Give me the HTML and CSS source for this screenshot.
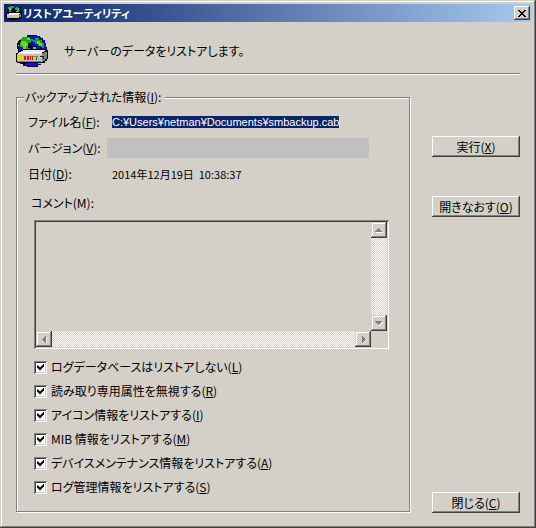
FILE: index.html
```html
<!DOCTYPE html>
<html lang="ja">
<head>
    <meta charset="UTF-8">
    <meta name="viewport" content="width=device-width, initial-scale=1.0">
    <title>リストアユーティリティ</title>
    <link rel="stylesheet" href="styles.css">
</head>
<body>
    <svg class="defs" width="0" height="0" aria-hidden="true">
        <symbol id="server" viewBox="0 0 32 32">
            <!-- globe -->
            <path fill="#0a0a50" d="M11 0h10v1h3v2h3v2h2v3h1v4h1v9h-1v4h-2v3h-3v2h-3v2h-11v-1h-4v-2h-3v-4h-2v-14h1v-4h2v-3h3v-2h3z"/>
            <path fill="#1010d8" d="M15 1h7v1h3v2h2v2h2v3h1v8h-5v-3h-5v-3h-4v-4h-3v-4h2zM3 11h5v2h3v3h-8zM9 28h13v2h-2v1h-9v-1h-2z"/>
            <path fill="#20a020" d="M9 2h5v2h3v2h-2v2h-3v3h2v3h-3v2h-3v-4h-4v-2h-2v-3h2v-3h2v-2h3zM19 3h4v2h3v3h2v5h-3v-2h-3v-2h-3v-2h-2v-2h2z"/>
            <path fill="#60e010" d="M5 6h5v2h2v3h-2v3h-3v-3h-2zM11 3h3v2h-3zM21 6h3v2h2v3h-3v-2h-2zM17 12h3v2h-3zM22 28h3v1h-3z"/>
            <path fill="#000" d="M3 5h2v2h-1v3h-2v4h-1v-6h1v-2h1zM26 3h1v2h-1zM12 11h2v2h-2zM24 12h2v2h-2zM28 23h2v3h-1v2h-3v-2h2zM4 27h6v2h-4v-1h-2z"/>
            <!-- server box -->
            <path fill="#000" d="M7 14h23v1h2v9h-1v2h-2v1h-2v1h-26v-1h-1v-9h2v-2h2v-1h3z"/>
            <path fill="#e8e8e8" d="M7 15h22v1h-1v1h-2v2h-24v-1h1v-1h2v-1h2z"/>
            <path fill="#fff" d="M3 17h22v1h-22z"/>
            <path fill="#c0c0c0" d="M1 19h25v8h-25z"/>
            <path fill="#808080" d="M26 18h2v-1h3v7h-2v2h-2v1h-1zM1 26h24v1h-24z"/>
            <path fill="#f0e000" d="M2 21h1v4h-1zM4 21h1v4h-1zM6 21h1v4h-1z"/>
            <path fill="#e81010" d="M8 21h2v4h-2zM11 21h2v4h-2zM14 21h1v4h-1zM16 21h1v4h-1z"/>
            <path fill="#20b030" d="M18 21h4v1h-1v2h-1v-2h-2z"/>
            <path fill="#f0e000" d="M18 22h2v3h-2zM21 22h1v1h-1z"/>
            <path fill="#2020d0" d="M20 23h1v2h-1z"/>
            <path fill="#202020" d="M24 21h4v1h-4zM27 22h1v2h-1z"/>
        </symbol>
        <symbol id="server-small" viewBox="0 0 16 16">
            <path fill="#080838" d="M5 0h6v1h2v1h2v3h1v6h-1v3h-3v1h-8v-1h-2v-3h-1v-6h1v-3h3z"/>
            <path fill="#1515d0" d="M9 0h2v1h2v2h1v4h-3v-2h-2v-2h-1z"/>
            <path fill="#28a828" d="M4 1h4v2h-2v2h-1v3h-2v-4h-1v-2h2zM10 2h2v2h1v3h-2v-2h-2z"/>
            <path fill="#60e010" d="M3 3h2v2h-2zM10 6h2v1h-2zM12 3h1v2h-1z"/>
            <path fill="#000" d="M3 7h13v6h-2v1h-13v-1h-1v-4h2z"/>
            <path fill="#f0f0f0" d="M3 8h11v1h-1v1h-12v-1h2z"/>
            <path fill="#c0c0c0" d="M1 10h12v3h-12z"/>
            <path fill="#808080" d="M13 10h1v-1h1v3h-2z"/>
            <path fill="#f0e000" d="M8 11h1v1h-1zM10 11h1v1h-1z"/>
        </symbol>
        <symbol id="arrow-left" viewBox="0 0 7 7">
            <path fill="#fff" d="M5 1h1v6h-1z"/>
            <path fill="#808080" d="M4 0h1v7h-1v-1h-1v-1h-1v-1h-1v-1h1v-1h1v-1h1z"/>
        </symbol>
        <symbol id="arrow-right" viewBox="0 0 7 7">
            <path fill="#fff" d="M3 7v-1h1v-1h1v-1h1v-1h1v1h-1v1h-1v1h-1v1z"/>
            <path fill="#808080" d="M2 0h1v1h1v1h1v1h1v1h-1v1h-1v1h-1v1h-1z"/>
        </symbol>
        <symbol id="arrow-up" viewBox="0 0 8 7">
            <path fill="#fff" d="M1 5h7v1h-7z"/>
            <path fill="#808080" d="M3 1h1v1h1v1h1v1h1v1h-7v-1h1v-1h1v-1h1z"/>
        </symbol>
        <symbol id="arrow-down" viewBox="0 0 8 7">
            <path fill="#fff" d="M7 2h1v1h-1v1h-1v1h-1v1h-1v-1h1v-1h1v-1h1z"/>
            <path fill="#808080" d="M0 1h7v1h-1v1h-1v1h-1v1h-1v-1h-1v-1h-1v-1h-1z"/>
        </symbol>
    </svg>

    <div class="window">
        <div class="titlebar">
            <svg class="title-icon" width="16" height="16"><use href="#server-small"/></svg>
            <h1>リストアユーティリティ</h1>
            <button type="button" class="close" aria-label="閉じる">
                <svg width="8" height="7" viewBox="0 0 8 7"><path d="M0 0h2v1h1v1h2v-1h1v-1h2v1h-1v1h-1v1h-1v1h1v1h1v1h1v1h-2v-1h-1v-1h-2v1h-1v1h-2v-1h1v-1h1v-1h1v-1h-1v-1h-1v-1h-1z"/></svg>
            </button>
        </div>

        <div class="header">
            <svg width="32" height="32"><use href="#server"/></svg>
            <p>サーバーのデータをリストアします。</p>
        </div>

        <form class="content">
            <fieldset>
                <legend>バックアップされた情報(<u>I</u>):</legend>

                <div class="fields">
                    <label for="file">ファイル名(<u>F</u>):</label>
                    <div class="file-box">
                        <input type="text" id="file" class="file" value="C:¥Users¥netman¥Documents¥smbackup.cab" readonly>
                    </div>

                    <label for="version">バージョン(<u>V</u>):</label>
                    <input type="text" id="version" class="version" disabled>

                    <span>日付(<u>D</u>):</span>
                    <span class="date">2014年12月19日&nbsp; 10:38:37</span>
                </div>

                <label for="comment" class="comment-label">コメント(M):</label>
                <div class="comment-box">
                    <textarea id="comment" readonly></textarea>
                    <div class="scroll vertical">
                        <button type="button" disabled aria-label="上へ"><svg width="8" height="7"><use href="#arrow-up"/></svg></button>
                        <button type="button" disabled aria-label="下へ"><svg width="8" height="7"><use href="#arrow-down"/></svg></button>
                    </div>
                    <div class="scroll">
                        <button type="button" disabled aria-label="左へ"><svg width="7" height="7"><use href="#arrow-left"/></svg></button>
                        <button type="button" disabled aria-label="右へ"><svg width="7" height="7"><use href="#arrow-right"/></svg></button>
                    </div>
                </div>

                <div class="options">
                    <label><input type="checkbox" checked><span>ログデータベースはリストアしない(<u>L</u>)</span></label>
                    <label><input type="checkbox" checked><span>読み取り専用属性を無視する(<u>R</u>)</span></label>
                    <label><input type="checkbox" checked><span>アイコン情報をリストアする(<u>I</u>)</span></label>
                    <label><input type="checkbox" checked><span>MIB 情報をリストアする(<u>M</u>)</span></label>
                    <label><input type="checkbox" checked><span>デバイスメンテナンス情報をリストアする(<u>A</u>)</span></label>
                    <label><input type="checkbox" checked><span>ログ管理情報をリストアする(<u>S</u>)</span></label>
                </div>
            </fieldset>

            <div class="buttons">
                <button type="submit">実行(<u>X</u>)</button>
                <button type="button">開きなおす(<u>O</u>)</button>
                <button type="button" class="bottom">閉じる(<u>C</u>)</button>
            </div>
        </form>
    </div>
</body>
</html>
```

FILE: styles.css
```css
* {
    box-sizing: border-box;
}
body {
    margin: 0;
    background: #d4d0c8;
    color: #000;
    font-family: "Noto Sans CJK JP", sans-serif;
    font-size: 12px;
    line-height: 16px;
    font-feature-settings: "palt";
}
button, input, textarea {
    font: inherit;
    font-feature-settings: inherit;
    color: inherit;
    margin: 0;
    padding: 0;
    border-radius: 0;
}
svg {
    display: block;
    flex: none;
    shape-rendering: crispEdges;
}
.defs {
    position: absolute;
}
.window {
    display: flex;
    flex-direction: column;
    min-height: 100vh;
    padding: 4px;
    background: #d4d0c8;
    box-shadow: inset -1px -1px #404040, inset 1px 1px #d4d0c8, inset -2px -2px #808080, inset 2px 2px #fff;
}

/* title bar */
.titlebar {
    display: flex;
    align-items: center;
    height: 18px;
    padding: 0 2px;
    background: linear-gradient(to right, #0a246a, #a6caf0);
}
.titlebar h1 {
    flex: 1;
    margin: 0 0 0 1px;
    color: #fff;
    font-size: 11px;
    line-height: 18px;
    font-weight: bold;
}
.close {
    display: flex;
    align-items: center;
    justify-content: center;
    width: 16px;
    height: 14px;
}
button {
    border: none;
    background: #d4d0c8;
    box-shadow: inset -1px -1px #404040, inset 1px 1px #fff, inset -2px -2px #808080;
}

/* header */
.header {
    display: flex;
    align-items: center;
    gap: 16px;
    height: 53px;
    margin: 0 12px;
    padding-top: 6px;
    border-bottom: 1px solid #fff;
    box-shadow: inset 0 -1px #808080;
}
.header p {
    margin: 0;
}

/* content */
.content {
    display: flex;
    flex: 1;
    gap: 21px;
    padding: 14px 12px 11px;
}
fieldset {
    flex: 1;
    min-width: 0;
    margin: 0 1px 1px 0;
    padding: 0 20px 8px 17px;
    border: 1px solid #808080;
    box-shadow: 1px 1px #fff, inset 1px 1px #fff;
}
legend {
    margin-left: -10px;
    padding: 0 4px 0 1px;
    background: #d4d0c8;
}
.fields {
    display: grid;
    grid-template-columns: 79px 1fr;
    align-items: center;
    row-gap: 8px;
    margin: 9px 20px 0 -6px;
}
.file-box {
    display: flex;
    padding-left: 5px;
}
.file {
    width: 228px;
    height: 12px;
    border: none;
    border-right: 1px solid #ffdc84;
    background: #0a246a;
    color: #fff;
    font-family: "Liberation Sans", sans-serif;
    font-size: 11px;
    line-height: 12px;
    outline: none;
}
.version {
    width: 100%;
    height: 20px;
    border: none;
    background: #c0c0c0;
}
.date {
    padding-left: 5px;
    font-size: 11px;
}
.comment-label {
    display: block;
    margin: 13px 0 9px -3px;
}
.comment-box {
    display: grid;
    grid-template-columns: 1fr 16px;
    grid-template-rows: 109px 16px;
    padding: 2px;
    box-shadow: inset 1px 1px #808080, inset -1px -1px #fff, inset 2px 2px #404040;
}
textarea {
    width: 100%;
    height: 100%;
    border: none;
    background: #d4d0c8;
    resize: none;
    outline: none;
}
.scroll {
    display: flex;
    justify-content: space-between;
    background: repeating-conic-gradient(#fff 0 25%, #d4d0c8 0 50%) 0 0 / 2px 2px;
}
.vertical {
    flex-direction: column;
}
.scroll button {
    display: flex;
    align-items: center;
    justify-content: center;
    width: 16px;
    height: 16px;
    box-shadow: inset -1px -1px #404040, inset 1px 1px #d4d0c8, inset -2px -2px #808080, inset 2px 2px #fff;
}

/* check boxes */
.options {
    margin-top: 6px;
}
.options label {
    display: flex;
    align-items: center;
    gap: 4px;
    height: 24px;
}
input[type="checkbox"] {
    appearance: none;
    width: 13px;
    height: 13px;
    background: #fff;
    box-shadow: inset 1px 1px #808080, inset -1px -1px #fff, inset 2px 2px #404040, inset -2px -2px #d4d0c8;
}
input[type="checkbox"]:checked::before {
    content: "";
    display: block;
    width: 7px;
    height: 7px;
    margin: 3px;
    background: #000;
    clip-path: polygon(0 2px, 1px 2px, 3px 4px, 7px 0, 7px 3px, 3px 7px, 0 4px);
}

/* buttons */
.buttons {
    display: flex;
    flex-direction: column;
    width: 88px;
    padding-top: 47px;
}
.buttons button {
    height: 21px;
    margin-bottom: 39px;
}
.buttons .bottom {
    margin: auto 0 0;
}
```
